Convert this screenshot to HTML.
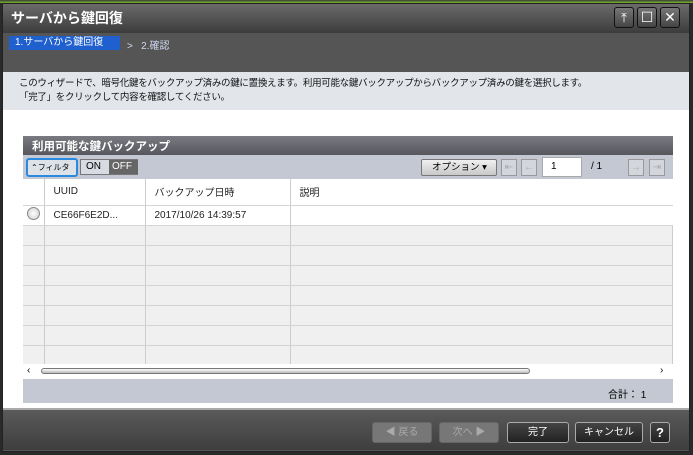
<!DOCTYPE html><html><head><meta charset="utf-8"><style>
*{margin:0;padding:0;box-sizing:border-box}
body{width:693px;height:455px;background:#2a2a2a;font-family:"Liberation Sans","Noto Sans CJK JP",sans-serif;position:relative;overflow:hidden;font-size:10px;white-space:nowrap}
.a{position:absolute}
.win{left:2px;top:3px;width:688px;height:449px;background:#555;border:1px solid #222}
.btn{border:1px solid #111;border-radius:3px;color:#fff;font-size:10px;text-align:center;line-height:19px}
td{border-right:1px solid #ccc;border-bottom:1px solid #d4d4d4;height:20px;padding-left:9px;font-size:10px;color:#222}
table{border-collapse:collapse;width:650px}
</style></head><body>
<div class="a" style="left:0;top:0;width:693px;height:3px;background:linear-gradient(#3a3a3a,#7ab82a)"></div>
<div class="a win"></div>
<div class="a" style="left:3px;top:4px;width:686px;height:29px;background:linear-gradient(#6a6a6a,#3c3c3c)"></div>
<div class="a" style="left:11px;top:8px;color:#fff;font-size:14px;font-weight:bold">サーバから鍵回復</div>
<div class="a btn" style="left:614px;top:7px;width:20px;height:21px;background:linear-gradient(#777,#444);font-size:13px">⤒</div>
<div class="a btn" style="left:637px;top:7px;width:20px;height:21px;background:linear-gradient(#777,#444);font-size:14px">☐</div>
<div class="a btn" style="left:660px;top:7px;width:20px;height:21px;background:linear-gradient(#777,#444);font-size:14px">✕</div>
<div class="a" style="left:3px;top:33px;width:686px;height:39px;background:#555"></div>
<div class="a" style="left:9px;top:36px;width:111px;height:14px;background:#1f5fce;color:#fff;font-size:10px;padding-left:6px;line-height:14px">1.サーバから鍵回復</div>
<div class="a" style="left:127px;top:37px;color:#cfd8f0;font-size:10px">&gt;&nbsp;&nbsp; 2.確認</div>
<div class="a" style="left:3px;top:72px;width:686px;height:38px;background:#e2e5ea;color:#111;font-size:9.5px;padding:5px 0 0 16px;line-height:14px;letter-spacing:-0.3px">このウィザードで、暗号化鍵をバックアップ済みの鍵に置換えます。利用可能な鍵バックアップからバックアップ済みの鍵を選択します。<br>「完了」をクリックして内容を確認してください。</div>
<div class="a" style="left:3px;top:110px;width:686px;height:298px;background:#fff"></div>
<div class="a" style="left:23px;top:136px;width:650px;height:19px;background:linear-gradient(#7a7b82,#56575d);color:#fff;font-weight:bold;font-size:11.5px;padding:2px 0 0 9px">利用可能な鍵バックアップ</div>
<div class="a" style="left:23px;top:155px;width:650px;height:24px;background:#c3c8d3"></div>
<div class="a" style="left:26px;top:158px;width:52px;height:19px;border:2px solid #2a8ae0;border-radius:3px;background:#dde1e8;font-size:8px;line-height:15px;padding-left:3px;overflow:hidden">⌃フィルタ</div>
<div class="a" style="left:80px;top:159px;width:58px;height:16px;border:1px solid #777;background:#d8dbe2;font-size:10px;line-height:14px"><span style="padding-left:5px">ON</span><span class="a" style="left:28px;top:0;width:29px;height:14px;background:#666;color:#fff;padding-left:3px">OFF</span></div>
<div class="a" style="left:421px;top:159px;width:76px;height:17px;border:1px solid #777;border-radius:2px;background:linear-gradient(#f0f0f0,#c8c8c8);font-size:9.5px;line-height:15px;padding-left:10px">オプション ▾</div>
<div class="a" style="left:501px;top:159px;width:16px;height:17px;border:1px solid #999;background:#d3d6dc;color:#aaa;text-align:center;line-height:15px">⇤</div>
<div class="a" style="left:521px;top:159px;width:16px;height:17px;border:1px solid #999;background:#d3d6dc;color:#aaa;text-align:center;line-height:15px">←</div>
<div class="a" style="left:542px;top:157px;width:40px;height:20px;background:#fff;border:1px solid #aaa;padding:3px 0 0 8px">1</div>
<div class="a" style="left:591px;top:161px">/ 1</div>
<div class="a" style="left:628px;top:159px;width:16px;height:17px;border:1px solid #999;background:#d3d6dc;color:#aaa;text-align:center;line-height:15px">→</div>
<div class="a" style="left:649px;top:159px;width:16px;height:17px;border:1px solid #999;background:#d3d6dc;color:#aaa;text-align:center;line-height:15px">⇥</div>
<div class="a" style="left:23px;top:179px;width:650px;height:186px;background:#f0f0f0;overflow:hidden">
<table>
<tr style="background:#fff"><td style="width:21px;height:26px"></td><td style="width:101px">UUID</td><td style="width:145px">バックアップ日時</td><td style="border-right:none">説明</td></tr>
<tr style="background:#fff"><td style="padding-left:4px"><span style="display:inline-block;width:13px;height:13px;border-radius:50%;border:1px solid #888;background:radial-gradient(#fff,#ccc)"></span></td><td>CE66F6E2D...</td><td>2017/10/26 14:39:57</td><td style="border-right:none"></td></tr>
<tr><td></td><td></td><td></td><td></td></tr><tr><td></td><td></td><td></td><td></td></tr><tr><td></td><td></td><td></td><td></td></tr><tr><td></td><td></td><td></td><td></td></tr><tr><td></td><td></td><td></td><td></td></tr><tr><td></td><td></td><td></td><td></td></tr><tr><td></td><td></td><td></td><td></td></tr></table></div>
<div class="a" style="left:23px;top:364px;width:650px;height:15px;background:#fff"></div>
<div class="a" style="left:27px;top:365px;font-size:10px">‹</div>
<div class="a" style="left:660px;top:365px;font-size:10px">›</div>
<div class="a" style="left:41px;top:368px;width:489px;height:6px;border:1px solid #777;border-radius:3px;background:linear-gradient(#fff,#bbb)"></div>
<div class="a" style="left:23px;top:379px;width:650px;height:24px;background:#c3c8d3"></div>
<div class="a" style="left:608px;top:386px">合計：  1</div>
<div class="a" style="left:3px;top:408px;width:686px;height:2px;background:#aaa"></div>
<div class="a" style="left:3px;top:410px;width:686px;height:40px;background:linear-gradient(#5a5a5a,#3e3e3e)"></div>
<div class="a btn" style="left:372px;top:422px;width:60px;height:21px;background:#777;color:#aaa;border-color:#666">◀ 戻る</div>
<div class="a btn" style="left:439px;top:422px;width:60px;height:21px;background:#777;color:#aaa;border-color:#666">次へ ▶</div>
<div class="a btn" style="left:507px;top:422px;width:62px;height:21px;background:linear-gradient(#444,#222);border-color:#aaa">完了</div>
<div class="a btn" style="left:575px;top:422px;width:68px;height:21px;background:linear-gradient(#444,#222);border-color:#aaa">キャンセル</div>
<div class="a btn" style="left:650px;top:422px;width:20px;height:21px;background:linear-gradient(#444,#222);border-color:#aaa;font-weight:bold;font-size:13px">?</div>
</body></html>
